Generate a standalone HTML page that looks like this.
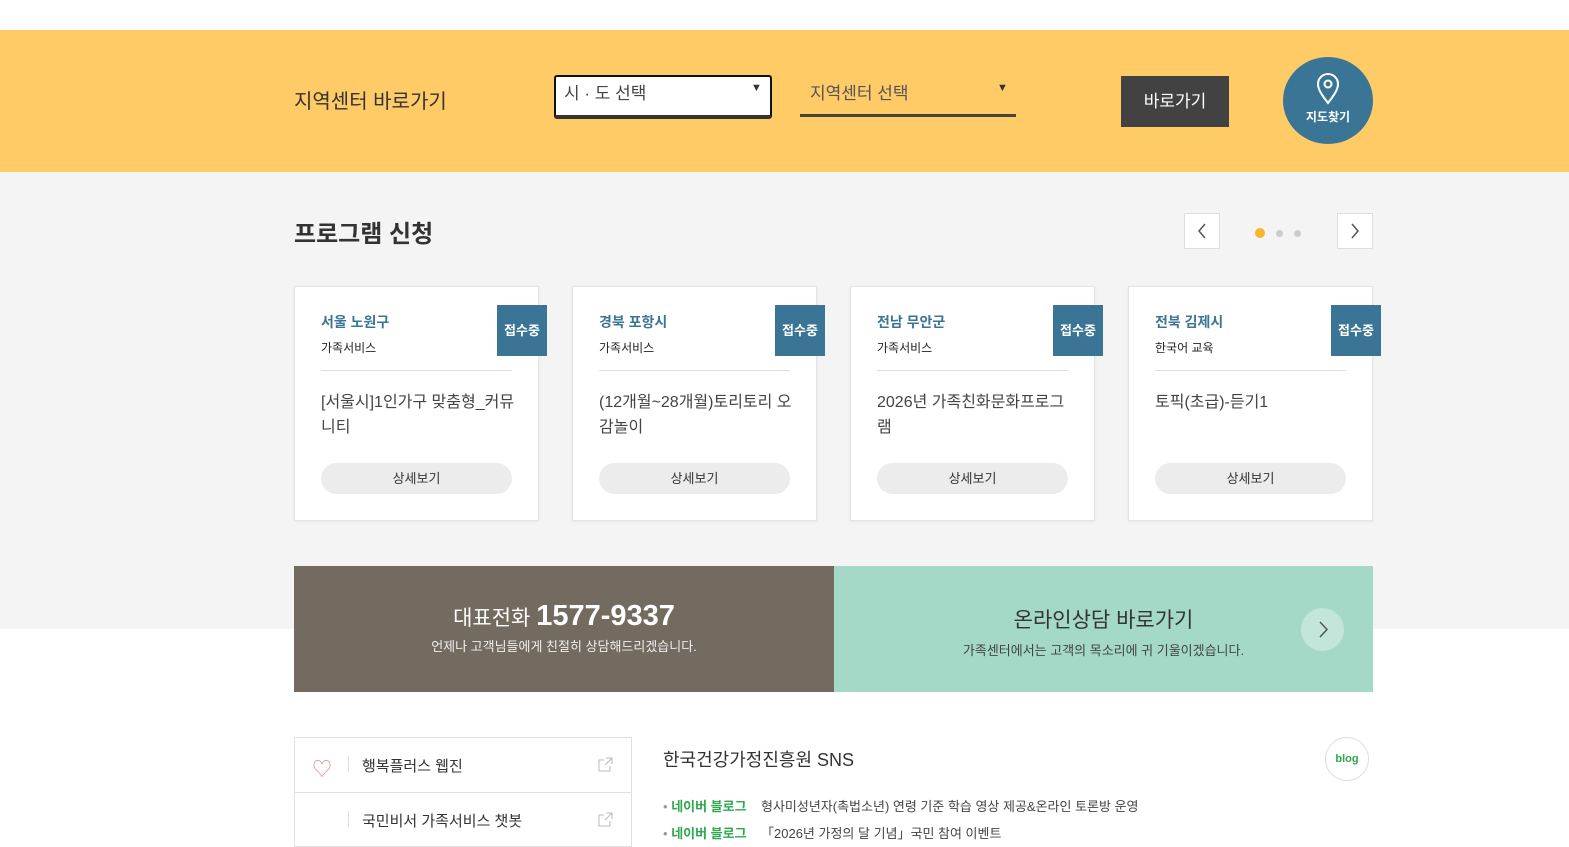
<!DOCTYPE html>
<html><head><meta charset="utf-8"><style>
*{margin:0;padding:0;box-sizing:border-box}
body{width:1569px;height:839px;overflow:hidden;background:#fff;font-family:"Liberation Sans","Noto Sans CJK KR",sans-serif;color:#333;position:relative}
.abs{position:absolute}
.yel{left:0;top:30px;width:1569px;height:142px;background:#fecb67}
.gray{left:0;top:172px;width:1569px;height:457px;background:#f4f4f4}
.card{width:245px;height:235px;top:286px;background:#fff;border:1px solid #e4e4e4;box-shadow:0 1px 3px rgba(0,0,0,.06)}
.card .loc{position:absolute;left:26px;top:25px;font-size:14px;font-weight:bold;color:#3b7595}
.card .cat{position:absolute;left:26px;top:52px;font-size:12px;color:#222}
.card .hr{position:absolute;left:26px;top:83px;width:191px;height:1px;background:#ddd}
.card .tt{position:absolute;left:26px;top:103px;width:195px;font-size:16px;line-height:25px;color:#444}
.card .btn{position:absolute;left:26px;top:176px;width:191px;height:31px;border-radius:16px;background:#ececec;text-align:center;line-height:31px;font-size:13px;color:#333}
.card .tag{position:absolute;left:202px;top:18px;width:50px;height:51px;background:#3b7595;color:#fff;font-size:13px;font-weight:bold;text-align:center;line-height:51px}
.nav{width:36px;height:36px;background:#fff;border:1px solid #ddd;top:213px}
</style></head><body>
<div class="abs yel"></div>
<div class="abs" style="left:294px;top:85px;font-size:20px;color:#333">지역센터 바로가기</div>
<div class="abs" style="left:554px;top:75px;width:218px;height:44px;background:#fff;border:2px solid #111;border-bottom:4px solid #333;border-radius:3px"></div>
<div class="abs" style="left:564px;top:79px;font-size:17px;color:#444">시 · 도 선택</div>
<div class="abs" style="left:751px;top:82px;font-size:11px;color:#333">▼</div>
<div class="abs" style="left:810px;top:79px;font-size:17px;color:#555">지역센터 선택</div>
<div class="abs" style="left:997px;top:82px;font-size:11px;color:#333">▼</div>
<div class="abs" style="left:800px;top:114px;width:216px;height:3px;background:#4a4538"></div>
<div class="abs" style="left:1121px;top:76px;width:108px;height:51px;background:#424242;color:#fff;font-size:17px;text-align:center;line-height:51px">바로가기</div>
<div class="abs" style="left:1283px;top:57px;width:90px;height:87px;border-radius:50%;background:#3b7595;color:#fff;text-align:center">
<svg width="26" height="32" viewBox="0 0 26 32" style="margin-top:16px"><path d="M13 30C6 21 3 16 3 11a10 10 0 0 1 20 0c0 5-3 10-10 19z" fill="none" stroke="#fff" stroke-width="2"/><circle cx="13" cy="11" r="3.5" fill="none" stroke="#fff" stroke-width="2"/></svg>
<div style="font-size:12px;font-weight:bold;margin-top:-2px">지도찾기</div></div>
<div class="abs gray"></div>
<div class="abs" style="left:294px;top:214px;font-size:24px;font-weight:bold;color:#333">프로그램 신청</div>
<div class="abs nav" style="left:1184px"><svg width="34" height="34"><path d="M20 10l-6 7 6 7" fill="none" stroke="#555" stroke-width="1.5"/></svg></div>
<div class="abs nav" style="left:1337px"><svg width="34" height="34"><path d="M14 10l6 7-6 7" fill="none" stroke="#555" stroke-width="1.5"/></svg></div>
<div class="abs" style="left:1255px;top:228px;width:10px;height:10px;border-radius:50%;background:#f6b62e"></div>
<div class="abs" style="left:1276px;top:230px;width:7px;height:7px;border-radius:50%;background:#ccc"></div>
<div class="abs" style="left:1294px;top:230px;width:7px;height:7px;border-radius:50%;background:#ccc"></div>
<div class="abs card" style="left:294px"><div class="loc">서울 노원구</div><div class="cat">가족서비스</div><div class="hr"></div><div class="tt">[서울시]1인가구 맞춤형_커뮤니티</div><div class="btn">상세보기</div><div class="tag">접수중</div></div>
<div class="abs card" style="left:572px"><div class="loc">경북 포항시</div><div class="cat">가족서비스</div><div class="hr"></div><div class="tt">(12개월~28개월)토리토리 오감놀이</div><div class="btn">상세보기</div><div class="tag">접수중</div></div>
<div class="abs card" style="left:850px"><div class="loc">전남 무안군</div><div class="cat">가족서비스</div><div class="hr"></div><div class="tt">2026년 가족친화문화프로그램</div><div class="btn">상세보기</div><div class="tag">접수중</div></div>
<div class="abs card" style="left:1128px"><div class="loc">전북 김제시</div><div class="cat">한국어 교육</div><div class="hr"></div><div class="tt">토픽(초급)-듣기1</div><div class="btn">상세보기</div><div class="tag">접수중</div></div>
<div class="abs" style="left:294px;top:566px;width:540px;height:126px;background:#736a60;color:#fff;text-align:center">
<div style="margin-top:34px;font-size:21px"><span>대표전화 </span><span style="font-size:29px;font-weight:bold">1577-9337</span></div>
<div style="font-size:13px;margin-top:3px;color:#eee">언제나 고객님들에게 친절히 상담해드리겠습니다.</div></div>
<div class="abs" style="left:834px;top:566px;width:539px;height:126px;background:#a3d9c6;color:#333;text-align:center">
<div style="margin-top:38px;font-size:21px">온라인상담 바로가기</div>
<div style="font-size:13px;margin-top:6px;color:#444">가족센터에서는 고객의 목소리에 귀 기울이겠습니다.</div>
<div style="position:absolute;left:467px;top:42px;width:43px;height:43px;border-radius:50%;background:rgba(255,255,255,.35)"><svg width="43" height="43"><path d="M19 14l7 7.5-7 7.5" fill="none" stroke="#555" stroke-width="1.5"/></svg></div></div>
<div class="abs" style="left:294px;top:737px;width:338px;height:110px;border:1px solid #e0e0e0"></div>
<div class="abs" style="left:294px;top:792px;width:338px;height:1px;background:#e0e0e0"></div>
<div class="abs" style="left:312px;top:753px;font-size:20px;color:#e88;">♡</div>
<div class="abs" style="left:348px;top:756px;width:1px;height:16px;background:#ddd"></div>
<div class="abs" style="left:348px;top:811px;width:1px;height:16px;background:#ddd"></div>
<div class="abs" style="left:362px;top:755px;font-size:15px">행복플러스 웹진</div>
<div class="abs" style="left:362px;top:810px;font-size:15px">국민비서 가족서비스 챗봇</div>
<div class="abs" style="left:598px;top:757px"><svg width="15" height="15"><path d="M8 1h6v6M14 1L7 8M12 9v5H1V3h5" fill="none" stroke="#bbb"/></svg></div>
<div class="abs" style="left:598px;top:812px"><svg width="15" height="15"><path d="M8 1h6v6M14 1L7 8M12 9v5H1V3h5" fill="none" stroke="#bbb"/></svg></div>
<div class="abs" style="left:663px;top:746px;font-size:18px;color:#333">한국건강가정진흥원 SNS</div>
<div class="abs" style="left:1325px;top:737px;width:44px;height:44px;border-radius:50%;border:1px solid #ddd;background:#fff;color:#2fa84f;font-size:11px;font-weight:bold;text-align:center;line-height:42px">blog</div>
<div class="abs" style="left:663px;top:796px;font-size:13px;color:#444"><span style="color:#999">•</span> <b style="color:#2fa84f">네이버 블로그</b>&nbsp;&nbsp;&nbsp; 형사미성년자(촉법소년) 연령 기준 학습 영상 제공&amp;온라인 토론방 운영</div>
<div class="abs" style="left:663px;top:823px;font-size:13px;color:#444"><span style="color:#999">•</span> <b style="color:#2fa84f">네이버 블로그</b>&nbsp;&nbsp;&nbsp; 「2026년 가정의 달 기념」국민 참여 이벤트</div>
</body></html>
